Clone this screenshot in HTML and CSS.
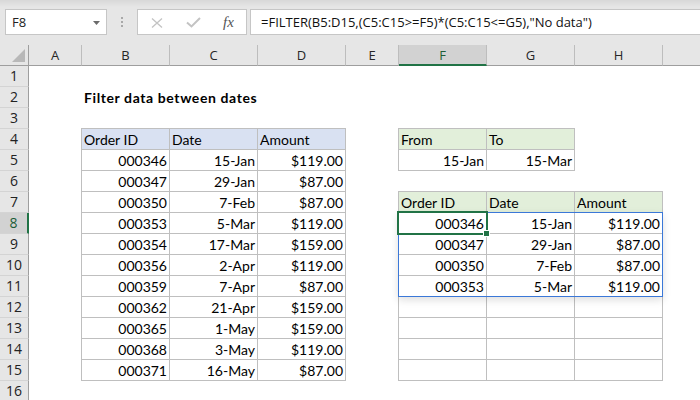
FILE: index.html
```html
<!DOCTYPE html>
<html>
<head>
<meta charset="utf-8">
<link rel="stylesheet" href="styles.css">
</head>
<body>
<div class="toolbar">
  <div class="namebox"><span class="nb-text">F8</span><svg class="dd" width="7" height="4" viewBox="0 0 7 4"><polygon points="0,0 7,0 3.5,4" fill="#6b6b6b"/></svg></div>
  <div class="dots"><i></i><i></i><i></i></div>
  <div class="btns">
    <svg class="ic-x" width="12" height="10" viewBox="0 0 12 10"><path d="M1 0.5 L11 9.5 M11 0.5 L1 9.5" stroke="#c3c3c3" stroke-width="1.3" fill="none"/></svg>
    <svg class="ic-ok" width="15" height="11" viewBox="0 0 15 11"><path d="M1 5.5 L5.5 9.5 L14 1" stroke="#c3c3c3" stroke-width="2" fill="none"/></svg>
    <span class="fx">fx</span>
  </div>
  <div class="formula">=FILTER(B5:D15,(C5:C15&gt;=F5)*(C5:C15&lt;=G5),"No data")</div>
</div>
<div class="sheet">
  <div class="row">
    <div class="ch corner"><svg width="28" height="20" viewBox="0 0 28 20"><polygon points="25,4 25,17 12,17" fill="#b8b8b8"/></svg></div>
    <div class="ch">A</div><div class="ch">B</div><div class="ch">C</div><div class="ch">D</div><div class="ch">E</div><div class="ch sel">F</div><div class="ch">G</div><div class="ch">H</div><div class="ch last"></div>
  </div>
  <div class="row">
    <div class="rh">1</div><div></div><div></div><div></div><div></div><div></div><div></div><div></div><div></div><div></div>
  </div>
  <div class="row">
    <div class="rh">2</div><div></div><div class="c title">Filter data between dates</div><div></div><div></div><div></div><div></div><div></div><div></div><div></div>
  </div>
  <div class="row">
    <div class="rh">3</div><div></div><div></div><div></div><div></div><div></div><div></div><div></div><div></div><div></div>
  </div>
  <div class="row">
    <div class="rh">4</div><div></div>
    <div class="c b tl hb">Order ID</div><div class="c b t hb">Date</div><div class="c b t hb">Amount</div>
    <div></div>
    <div class="c b tl hg">From</div><div class="c b t hg">To</div>
    <div></div><div></div>
  </div>
  <div class="row">
    <div class="rh">5</div><div></div>
    <div class="c b l r">000346</div><div class="c b r">15-Jan</div><div class="c b r">$119.00</div>
    <div></div>
    <div class="c b l r">15-Jan</div><div class="c b r">15-Mar</div>
    <div></div><div></div>
  </div>
  <div class="row">
    <div class="rh">6</div><div></div>
    <div class="c b l r">000347</div><div class="c b r">29-Jan</div><div class="c b r">$87.00</div>
    <div></div><div></div><div></div><div></div><div></div>
  </div>
  <div class="row">
    <div class="rh">7</div><div></div>
    <div class="c b l r">000350</div><div class="c b r">7-Feb</div><div class="c b r">$87.00</div>
    <div></div>
    <div class="c b tl hg">Order ID</div><div class="c b t hg">Date</div><div class="c b t hg">Amount</div>
    <div></div>
  </div>
  <div class="row">
    <div class="rh rsel">8</div><div></div>
    <div class="c b l r">000353</div><div class="c b r">5-Mar</div><div class="c b r">$119.00</div>
    <div></div>
    <div class="c b l r">000346</div><div class="c b r">15-Jan</div><div class="c b r">$119.00</div>
    <div></div>
  </div>
  <div class="row">
    <div class="rh">9</div><div></div>
    <div class="c b l r">000354</div><div class="c b r">17-Mar</div><div class="c b r">$159.00</div>
    <div></div>
    <div class="c b l r">000347</div><div class="c b r">29-Jan</div><div class="c b r">$87.00</div>
    <div></div>
  </div>
  <div class="row">
    <div class="rh">10</div><div></div>
    <div class="c b l r">000356</div><div class="c b r">2-Apr</div><div class="c b r">$119.00</div>
    <div></div>
    <div class="c b l r">000350</div><div class="c b r">7-Feb</div><div class="c b r">$87.00</div>
    <div></div>
  </div>
  <div class="row">
    <div class="rh">11</div><div></div>
    <div class="c b l r">000359</div><div class="c b r">7-Apr</div><div class="c b r">$87.00</div>
    <div></div>
    <div class="c b l r">000353</div><div class="c b r">5-Mar</div><div class="c b r">$119.00</div>
    <div></div>
  </div>
  <div class="row">
    <div class="rh">12</div><div></div>
    <div class="c b l r">000362</div><div class="c b r">21-Apr</div><div class="c b r">$159.00</div>
    <div></div>
    <div class="c b l"></div><div class="c b"></div><div class="c b"></div>
    <div></div>
  </div>
  <div class="row">
    <div class="rh">13</div><div></div>
    <div class="c b l r">000365</div><div class="c b r">1-May</div><div class="c b r">$159.00</div>
    <div></div>
    <div class="c b l"></div><div class="c b"></div><div class="c b"></div>
    <div></div>
  </div>
  <div class="row">
    <div class="rh">14</div><div></div>
    <div class="c b l r">000368</div><div class="c b r">3-May</div><div class="c b r">$119.00</div>
    <div></div>
    <div class="c b l"></div><div class="c b"></div><div class="c b"></div>
    <div></div>
  </div>
  <div class="row">
    <div class="rh">15</div><div></div>
    <div class="c b l r">000371</div><div class="c b r">16-May</div><div class="c b r">$87.00</div>
    <div></div>
    <div class="c b l"></div><div class="c b"></div><div class="c b"></div>
    <div></div>
  </div>
  <div class="row">
    <div class="rh">16</div><div></div><div></div><div></div><div></div><div></div><div></div><div></div><div></div><div></div>
  </div>
  <div class="spill"></div>
  <div class="active"><div class="handle"></div></div>
</div>
</body>
</html>
```
FILE: styles.css
```css
* { box-sizing: border-box; margin: 0; padding: 0; }
html, body { width: 700px; height: 400px; overflow: hidden; background: #ffffff; }
body { font-family: Lato, "Liberation Sans", sans-serif; color: #000; }

.toolbar {
  height: 45px;
  background: linear-gradient(#d8d8d8 0px, #e6e6e6 7px);
  display: flex;
  align-items: flex-start;
  padding: 9px 0 0 5px;
}
.namebox {
  width: 102px;
  height: 26px;
  background: #fff;
  border: 1px solid #c6c6c6;
  display: flex;
  align-items: center;
  padding: 0 6px 0 6px;
  font-family: "Open Sans", "Noto Sans", sans-serif;
  font-size: 13px;
  color: #222;
}
.nb-text { line-height: 20px; }
.dd { margin-left: auto; margin-top: 1px; }
.dots {
  width: 30px;
  height: 26px;
  display: flex;
  flex-direction: column;
  align-items: center;
  padding-top: 8px;
  gap: 2px;
}
.dots i { display: block; width: 2px; height: 2px; background: #a8a8a8; }
.btns {
  width: 110px;
  height: 26px;
  background: #fff;
  border: 1px solid #c6c6c6;
  display: flex;
  align-items: center;
  padding-left: 13px;
}
.ic-x { margin-top: 1px; }
.ic-ok { margin-left: 23px; margin-top: 1px; }
.fx {
  margin-left: 22px;
  font-family: "Liberation Serif", serif;
  font-style: italic;
  font-size: 15px;
  color: #555;
  line-height: 20px;
}
.formula {
  flex: 1;
  height: 26px;
  margin-left: 3px;
  background: #fff;
  border: 1px solid #c6c6c6;
  border-right: none;
  padding-left: 10px;
  font-family: "Open Sans", "Noto Sans", sans-serif;
  font-size: 13px;
  line-height: 24px;
  color: #111;
  white-space: nowrap;
}

.sheet { position: relative; }
.row {
  display: grid;
  grid-template-columns: 29px 53px 88px 88px 88px 53px 88px 88px 88px 1fr;
  height: 21px;
}
.row > div { height: 21px; }

.ch {
  background: #e6e6e6;
  border-right: 1px solid #bdbdbd;
  border-bottom: 1px solid #9e9e9e;
  text-align: center;
  font-family: "Open Sans", "Noto Sans", sans-serif;
  font-size: 13px;
  line-height: 20px;
  color: #262626;
}
.ch.corner { border-right-color: #9e9e9e; }
.ch.corner svg { display: block; }
.ch.last { border-right: none; }
.ch.sel {
  background: #d2d2d2;
  border-bottom: 2px solid #217346;
  color: #1d5e38;
}

.rh {
  background: #e6e6e6;
  border-right: 1px solid #9e9e9e;
  border-bottom: 1px solid #d4d4d4;
  text-align: center;
  font-family: "Open Sans", "Noto Sans", sans-serif;
  font-size: 14px;
  line-height: 20px;
  color: #222;
}
.rh.rsel {
  background: #d2d2d2;
  border-right: 2px solid #217346;
  color: #1d5e38;
}

.c {
  font-size: 14px;
  line-height: 19px;
  padding: 1px 2px 0 2px;
  white-space: nowrap;
}
.c.r { text-align: right; }
.title { font-weight: 700; letter-spacing: 0.6px; }
.b {
  border-right: 1px solid #bfbfbf;
  border-bottom: 1px solid #bfbfbf;
}
.t { box-shadow: 0 -1px 0 0 #bfbfbf; }
.l { box-shadow: -1px 0 0 0 #bfbfbf; }
.tl { box-shadow: 0 -1px 0 0 #bfbfbf, -1px 0 0 0 #bfbfbf, -1px -1px 0 0 #bfbfbf; }
.hb { background: #d9e1f2; }
.hg { background: #e2efda; }

.spill {
  position: absolute;
  left: 398px;
  top: 167px;
  width: 265px;
  height: 85px;
  border: 1px solid #3b78d8;
  box-shadow: 0 3px 8px rgba(0, 0, 0, 0.13);
  pointer-events: none;
}
.active {
  position: absolute;
  left: 397px;
  top: 166px;
  width: 91px;
  height: 24px;
  border: 2px solid #217346;
}
.handle {
  position: absolute;
  left: 84px;
  top: 17px;
  width: 7px;
  height: 7px;
  background: #217346;
  border: 1px solid #fff;
}
```
